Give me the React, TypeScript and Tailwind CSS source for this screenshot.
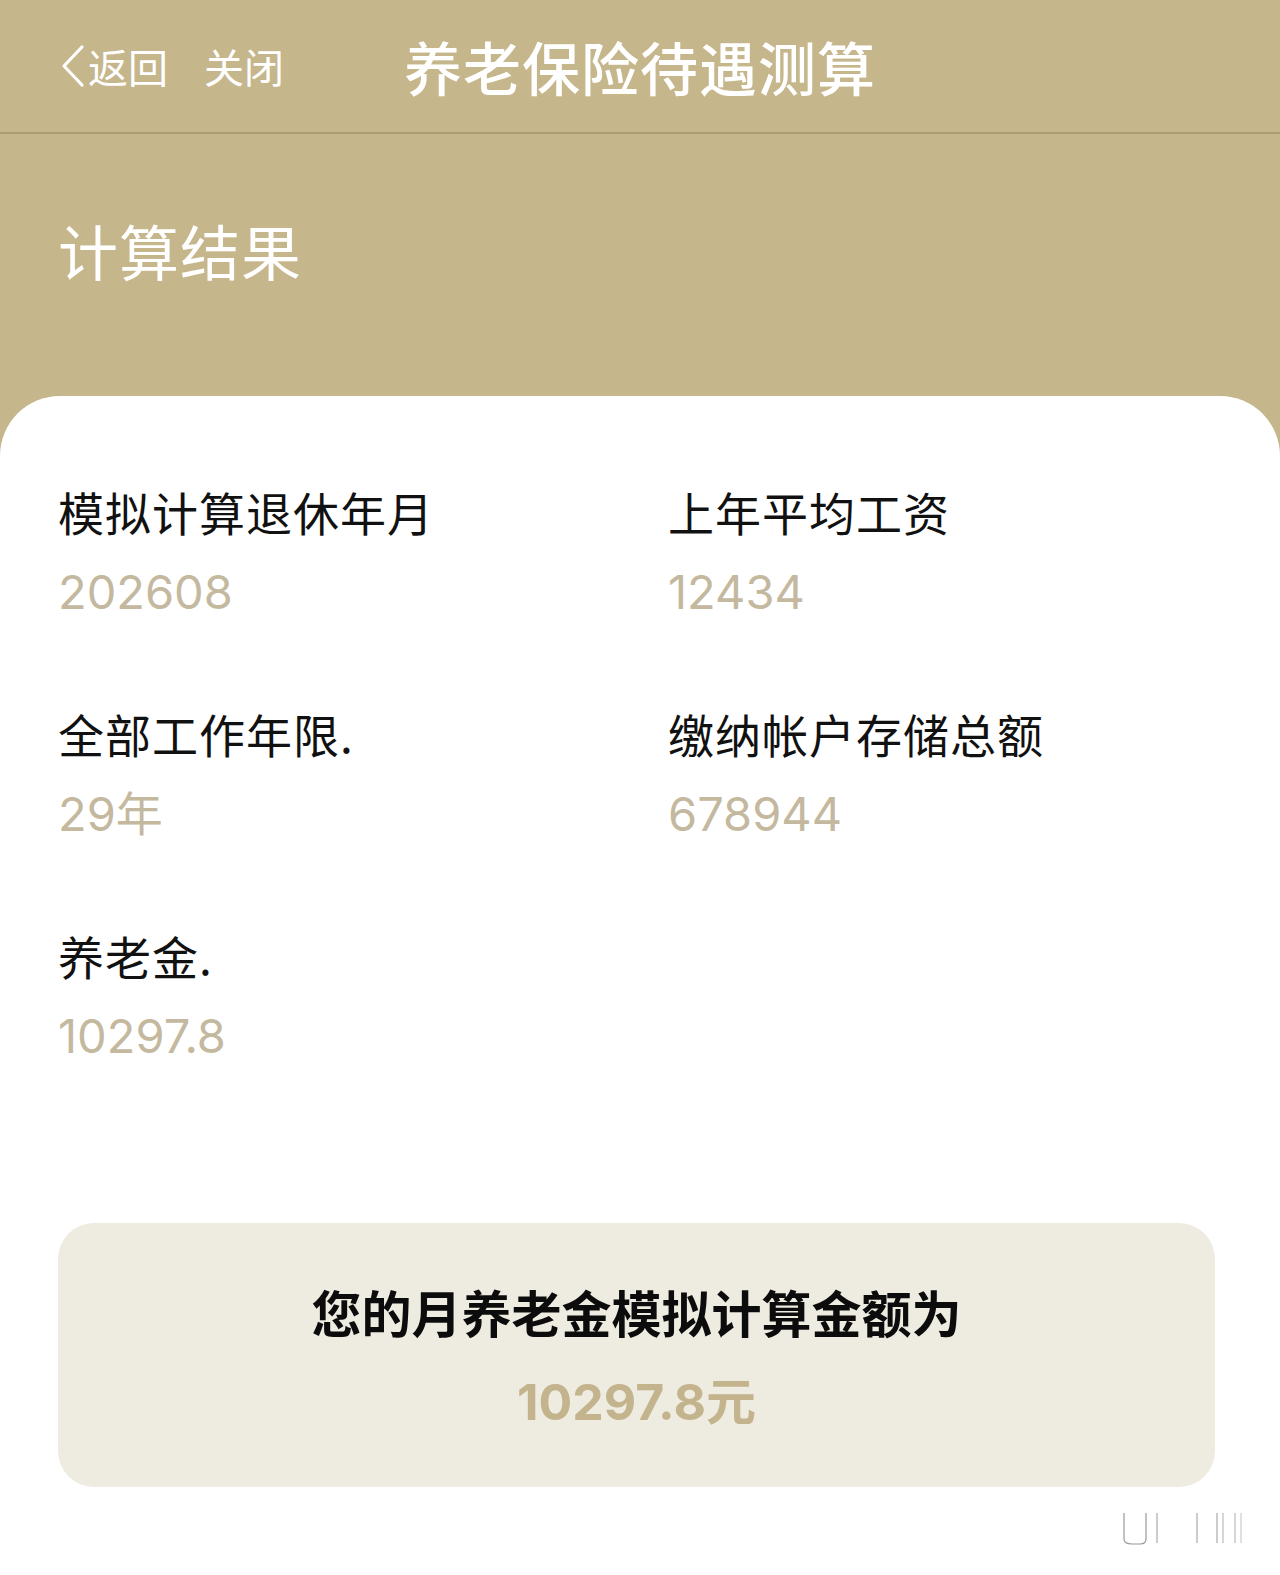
import React from "react";

const CJK = { fontFamily: '"Noto Sans CJK SC", "Noto Sans", sans-serif' };
const NUM = { fontFamily: 'Inter, "Noto Sans CJK SC", sans-serif' };

function Item({ label, value }: { label: string; value: string }) {
  return (
    <div className="flex flex-col">
      <div className="text-[46px] leading-[56px] text-[#111111] tracking-[1px]">{label}</div>
      <div className="mt-[25px] text-[47px] leading-[56px] text-[#c4b99f]" style={NUM}>{value}</div>
    </div>
  );
}

export default function App() {
  return (
    <div className="w-[1280px] h-[1575px] bg-[#c6b68c] overflow-hidden flex flex-col" style={CJK}>
      {/* Top nav */}
      <div className="h-[134px] border-b-[2px] border-[#ab9c76] grid grid-cols-[1fr_auto_1fr] items-center shrink-0">
        <div className="flex items-center pl-[60px] text-white">
          <svg width="26" height="44" viewBox="0 0 26 44" className="mr-[2px]">
            <polyline points="22,3 4,22 22,41" fill="none" stroke="#ffffff" strokeWidth="3.2" strokeLinecap="round" strokeLinejoin="round" />
          </svg>
          <span className="text-[40px] leading-none">返回</span>
          <span className="text-[40px] leading-none ml-[36px]">关闭</span>
        </div>
        <div className="text-[58px] leading-none font-medium text-white tracking-[1px]">养老保险待遇测算</div>
        <div />
      </div>

      {/* Section title */}
      <div className="h-[262px] shrink-0 flex items-start pl-[58px] pt-[81px]">
        <span className="text-[60px] leading-[70px] text-white tracking-[1px]">计算结果</span>
      </div>

      {/* White card */}
      <div className="flex-1 bg-white rounded-t-[60px] flex flex-col pt-[87px]">
        <div className="grid grid-cols-[610px_1fr] pl-[58px] gap-y-[85px]">
          <Item label="模拟计算退休年月" value="202608" />
          <Item label="上年平均工资" value="12434" />
          <Item label="全部工作年限." value="29年" />
          <Item label="缴纳帐户存储总额" value="678944" />
          <Item label="养老金." value="10297.8" />
          <div />
        </div>

        <div className="mt-[159px] ml-[58px] w-[1157px] h-[264px] rounded-[36px] bg-[#eeebe1] flex flex-col items-center">
          <div className="mt-[58px] text-[50px] leading-[60px] font-bold text-[#0c0c0c]">您的月养老金模拟计算金额为</div>
          <div className="mt-[31px] text-[50px] leading-[60px] font-bold text-[#c4b48e]" style={NUM}>10297.8元</div>
        </div>

        <div className="flex justify-end pr-[20px] mt-[22px]">
          <svg width="160" height="40" viewBox="0 0 160 40">
            <path d="M24 4 V30 Q24 35 32 35 H40 Q46 35 46 30 V4" fill="none" stroke="#555" strokeWidth="1.2" opacity="0.6" />
            <rect x="56" y="4" width="2" height="30" fill="#999" opacity="0.5" />
            <rect x="96" y="4" width="2" height="30" fill="#999" opacity="0.5" />
            <rect x="116" y="4" width="2" height="30" fill="#999" opacity="0.5" />
            <rect x="122" y="4" width="2" height="30" fill="#999" opacity="0.4" />
            <rect x="134" y="4" width="2" height="30" fill="#999" opacity="0.4" />
            <rect x="140" y="4" width="2" height="30" fill="#999" opacity="0.3" />
          </svg>
        </div>
      </div>
    </div>
  );
}
